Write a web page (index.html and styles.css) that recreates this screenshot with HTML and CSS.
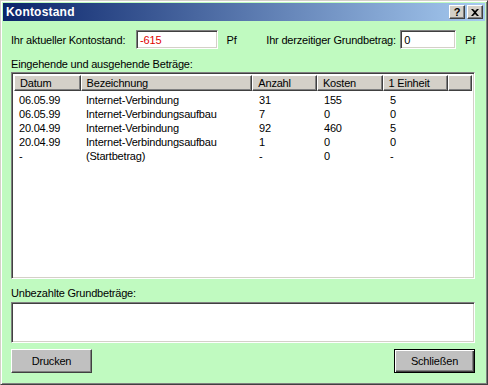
FILE: index.html
```html
<!DOCTYPE html>
<html lang="de">
<head>
  <meta charset="UTF-8" />
  <title>Kontostand</title>
  <link rel="stylesheet" href="styles.css">
</head>
<body>

<div class="window">
  <!-- Titelleiste -->
  <div class="titlebar">
    <span class="title">Kontostand</span>
    <div class="caption-buttons">
      <span class="cap-btn help">?</span>
      <span class="cap-btn close">
        <svg width="8" height="7" viewBox="0 0 8 7"><path d="M0 0h2l2 2 2-2h2L5 3.5 8 7H6L4 5 2 7H0l3-3.5z" fill="#000"/></svg>
      </span>
    </div>
  </div>

  <div class="client">
    <div class="top-row">
      <span class="lbl lbl-konto">Ihr aktueller Kontostand:</span>
      <div class="field field-konto negative">-615</div>
      <span class="unit unit-konto">Pf</span>
      <span class="lbl lbl-grund">Ihr derzeitiger Grundbetrag:</span>
      <div class="field field-grund">0</div>
      <span class="unit">Pf</span>
    </div>

    <div class="section-label">Eingehende und ausgehende Beträge:</div>

    <div class="listview">
      <div class="lv-header">
        <div class="hd col-datum">Datum</div>
        <div class="hd col-bez">Bezeichnung</div>
        <div class="hd col-anz">Anzahl</div>
        <div class="hd col-kost">Kosten</div>
        <div class="hd col-einh">1 Einheit</div>
        <div class="hd col-rest"></div>
      </div>
      <div class="lv-body" id="rows"></div>
    </div>

    <div class="section-label second">Unbezahlte Grundbeträge:</div>
    <div class="emptybox"></div>

    <div class="button-row">
      <button class="btn">Drucken</button>
      <button class="btn default">Schließen</button>
    </div>
  </div>
</div>

<script>
  const rows = [
    ['06.05.99', 'Internet-Verbindung', '31', '155', '5'],
    ['06.05.99', 'Internet-Verbindungsaufbau', '7', '0', '0'],
    ['20.04.99', 'Internet-Verbindung', '92', '460', '5'],
    ['20.04.99', 'Internet-Verbindungsaufbau', '1', '0', '0'],
    ['-', '(Startbetrag)', '-', '0', '-']
  ];
  const cols = ['col-datum', 'col-bez', 'col-anz', 'col-kost', 'col-einh'];
  const body = document.getElementById('rows');

  rows.forEach(r => {
    const row = document.createElement('div');
    row.className = 'lv-row';
    r.forEach((txt, i) => {
      const cell = document.createElement('div');
      cell.className = 'cell ' + cols[i];
      cell.textContent = txt;
      row.appendChild(cell);
    });
    body.appendChild(row);
  });
</script>

</body>
</html>
```

FILE: styles.css
```css
body {
  margin: 0;
  font-family: "Liberation Sans", Arial, sans-serif;
  font-size: 11px;
  letter-spacing: -0.2px;
  color: #000;
  background: #fff;
}

.window {
  width: 488px;
  height: 385px;
  box-sizing: border-box;
  background: #c0fac0;
  border: 1px solid;
  border-color: #d4d0c8 #404040 #404040 #d4d0c8;
  box-shadow: inset 1px 1px 0 #fff, inset -1px -1px 0 #808080;
  padding: 2px;
  display: flex;
  flex-direction: column;
}

/* title bar */
.titlebar {
  height: 18px;
  background: linear-gradient(to right, #0a246a, #a6caf0);
  display: flex;
  align-items: center;
  justify-content: space-between;
  padding: 0 2px 0 3px;
}

.title {
  color: #fff;
  font-weight: bold;
  font-size: 12px;
  letter-spacing: 0.2px;
}

.caption-buttons {
  display: flex;
}

.cap-btn {
  width: 16px;
  height: 14px;
  box-sizing: border-box;
  background: #d4d0c8;
  border: 1px solid;
  border-color: #fff #404040 #404040 #fff;
  box-shadow: inset -1px -1px 0 #808080;
  display: flex;
  align-items: center;
  justify-content: center;
  font-weight: bold;
  font-size: 11px;
  line-height: 1;
  letter-spacing: 0;
}

.cap-btn.close {
  margin-left: 2px;
}

/* client */
.client {
  flex: 1;
  padding: 9px 10px 0 8px;
  display: flex;
  flex-direction: column;
}

.top-row {
  display: flex;
  align-items: center;
  height: 19px;
  white-space: nowrap;
}

.lbl-konto {
  width: 126px;
}

.field {
  height: 19px;
  box-sizing: border-box;
  background: #fff;
  color: #000;
  border: 1px solid;
  border-color: #808080 #fff #fff #808080;
  box-shadow: inset 1px 1px 0 #404040, inset -1px -1px 0 #d4d0c8;
  padding: 2px 3px;
  line-height: 15px;
}

.field-konto {
  width: 82px;
}

.field.negative {
  color: #e00000;
}

.field-grund {
  width: 56px;
}

.unit {
  margin-left: 9px;
}

.unit-konto {
  width: 40px;
}

.lbl-grund {
  margin-left: 0;
  width: 135px;
}

.section-label {
  margin-top: 9px;
  height: 13px;
  line-height: 13px;
  white-space: nowrap;
}

.section-label.second {
  margin-top: 8px;
}

.listview {
  margin-top: 1px;
  height: 207px;
  box-sizing: border-box;
  background: #fff;
  border: 1px solid;
  border-color: #808080 #fff #fff #808080;
  box-shadow: inset 1px 1px 0 #404040, inset -1px -1px 0 #d4d0c8;
  padding: 2px;
}

.lv-header {
  display: flex;
  height: 16px;
}

.hd {
  box-sizing: border-box;
  background: #d4d0c8;
  border: 1px solid;
  border-color: #fff #404040 #404040 #fff;
  box-shadow: inset -1px -1px 0 #808080;
  padding: 0 5px;
  line-height: 14px;
  white-space: nowrap;
}

.col-datum { width: 67px; }
.col-bez { width: 173px; }
.col-anz { width: 65px; }
.col-kost { width: 66px; }
.col-einh { width: 66px; }
.col-rest { width: 24px; }

.lv-body {
  padding-top: 2px;
}

.lv-row {
  display: flex;
  height: 14px;
  line-height: 14px;
  white-space: nowrap;
}

.cell {
  padding-left: 5px;
  box-sizing: border-box;
}

.emptybox {
  margin-top: 2px;
  height: 41px;
  box-sizing: border-box;
  background: #fff;
  border: 1px solid;
  border-color: #808080 #fff #fff #808080;
  box-shadow: inset 1px 1px 0 #404040, inset -1px -1px 0 #d4d0c8;
}

.button-row {
  margin-top: 6px;
  display: flex;
  justify-content: space-between;
}

.btn {
  width: 81px;
  height: 24px;
  box-sizing: border-box;
  font-family: "Liberation Sans", Arial, sans-serif;
  font-size: 11px;
  letter-spacing: -0.2px;
  color: #000;
  background: #c0c0c0;
  border: 1px solid;
  border-color: #fff #404040 #404040 #fff;
  box-shadow: inset -1px -1px 0 #808080;
  padding: 0;
}

.btn.default {
  border: 1px solid #000;
  box-shadow: inset 1px 1px 0 #fff, inset -1px -1px 0 #404040, inset -2px -2px 0 #808080;
}
```
